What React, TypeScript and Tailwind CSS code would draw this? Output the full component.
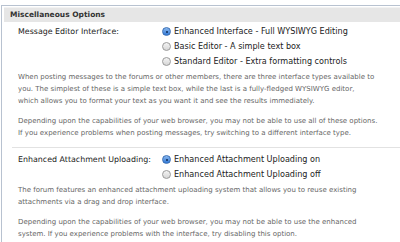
const font = { fontFamily: '"DejaVu Sans", Verdana, sans-serif' };

function Radio({ checked }: { checked?: boolean }) {
  return checked ? (
    <span className="relative inline-block w-[9px] h-[9px] shrink-0 rounded-full border border-[#3a6fb4] bg-gradient-to-b from-[#8ab8ee] to-[#2f78d6]">
      <span className="absolute left-[2.5px] top-[2.5px] w-[2.5px] h-[2.5px] rounded-full bg-[#0d2a55]" />
    </span>
  ) : (
    <span className="inline-block w-[9px] h-[9px] shrink-0 rounded-full border border-[#9a9a9a] bg-gradient-to-b from-[#f4f4f4] to-[#d6d6d6]" />
  );
}

// each paragraph is a list of lines, broken where the reference breaks them
function OptionRow({
  label,
  options,
  paragraphs,
}: {
  label: string;
  options: { text: string; checked?: boolean }[];
  paragraphs: string[][];
}) {
  return (
    <div className="pl-[16px]">
      <div className="flex">
        <div className="w-[144px] text-[7.9px] leading-[15px] text-[#222]">{label}</div>
        <div className="flex flex-col">
          {options.map((o) => (
            <label key={o.text} className="flex items-center gap-[3px] h-[15px] text-[8.1px] text-[#222]">
              <Radio checked={o.checked} />
              <span>{o.text}</span>
            </label>
          ))}
        </div>
      </div>
      <div className="mt-[2px] flex flex-col gap-[8px] text-[7px] leading-[12px] text-[#666] whitespace-nowrap">
        {paragraphs.map((lines) => (
          <p key={lines[0]}>
            {lines.map((l) => (
              <span key={l} className="block">
                {l}
              </span>
            ))}
          </p>
        ))}
      </div>
    </div>
  );
}

export default function App() {
  return (
    <div className="w-[400px] h-[242px] bg-white overflow-hidden" style={font}>
      <div className="ml-[1px] mt-[5px] h-[237px] border-l border-t border-[#b8c2d0]">
        <div className="mt-[1px] ml-[2px] h-[15px] bg-[#e6e6e6] border-t border-[#f2f2f2] pl-[6px] flex items-center text-[7.5px] font-bold text-[#333]">
          Miscellaneous Options
        </div>
        <div className="pt-[2px]">
          <OptionRow
            label="Message Editor Interface:"
            options={[
              { text: 'Enhanced Interface - Full WYSIWYG Editing', checked: true },
              { text: 'Basic Editor - A simple text box' },
              { text: 'Standard Editor - Extra formatting controls' },
            ]}
            paragraphs={[
              [
                'When posting messages to the forums or other members, there are three interface types available to',
                'you. The simplest of these is a simple text box, while the last is a fully-fledged WYSIWYG editor,',
                'which allows you to format your text as you want it and see the results immediately.',
              ],
              [
                'Depending upon the capabilities of your web browser, you may not be able to use all of these options.',
                'If you experience problems when posting messages, try switching to a different interface type.',
              ],
            ]}
          />
        </div>
        <div className="ml-[10px] mt-[8px] border-t border-[#e2e2e2]" />
        <div className="pt-[4px]">
          <OptionRow
            label="Enhanced Attachment Uploading:"
            options={[
              { text: 'Enhanced Attachment Uploading on', checked: true },
              { text: 'Enhanced Attachment Uploading off' },
            ]}
            paragraphs={[
              [
                'The forum features an enhanced attachment uploading system that allows you to reuse existing',
                'attachments via a drag and drop interface.',
              ],
              [
                'Depending upon the capabilities of your web browser, you may not be able to use the enhanced',
                'system. If you experience problems with the interface, try disabling this option.',
              ],
            ]}
          />
        </div>
      </div>
    </div>
  );
}
